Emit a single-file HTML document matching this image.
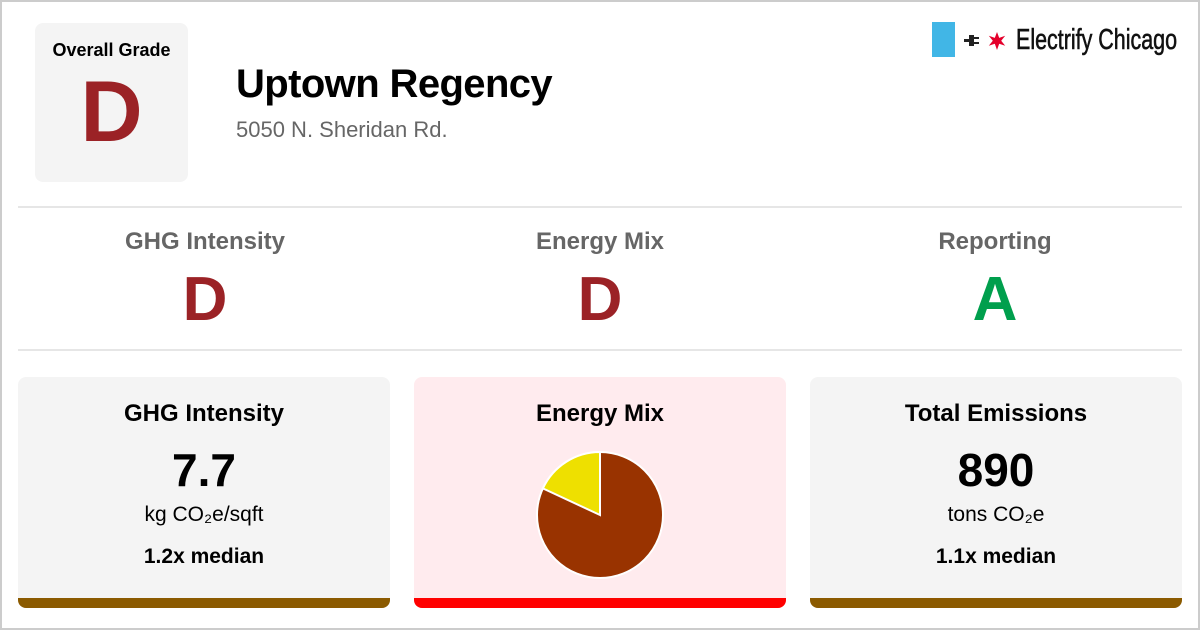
<!DOCTYPE html>
<html><head><meta charset="utf-8"><style>
*{margin:0;padding:0;box-sizing:border-box}
body{width:1200px;height:630px;background:#fff;font-family:"Liberation Sans",Roboto,sans-serif;position:relative;overflow:hidden}
.frame{position:absolute;left:0;top:0;width:1200px;height:630px;border:2px solid #ccc}
.grade{position:absolute;left:35px;top:23px;width:153px;height:159px;background:#f4f4f4;border-radius:8px;text-align:center}
.grade .l{font-weight:bold;font-size:18px;margin-top:17px}
.grade .g{font-weight:bold;font-size:86px;color:#9b2226;line-height:86px;margin-top:8px}
h1{position:absolute;left:236px;top:62px;font-size:40px;font-weight:bold;color:#000;letter-spacing:-0.6px}
.addr{position:absolute;left:236px;top:117px;font-size:22px;color:#666}
.hr{position:absolute;left:18px;width:1164px;height:2px;background:#e6e6e6}
.col{position:absolute;width:390px;text-align:center}
.col .t{font-size:24px;font-weight:bold;color:#666}
.col .v{font-size:62px;font-weight:bold;line-height:62px;margin-top:13px}
.card{position:absolute;top:377px;width:372px;height:231px;background:#f4f4f4;border-radius:8px;overflow:hidden;text-align:center}
.card .t{font-size:24px;font-weight:bold;margin-top:23px}
.card .n{font-size:46px;font-weight:bold;margin-top:15px;line-height:54px}
.card .u{font-size:21px;margin-top:6px}
.card .m{font-size:21px;font-weight:bold;margin-top:18px}
.bar{position:absolute;left:0;bottom:0;width:100%;height:10px}
</style></head><body>
<div class="frame"></div>
<div class="grade"><div class="l">Overall Grade</div><div class="g">D</div></div>
<h1>Uptown Regency</h1>
<div class="addr">5050 N. Sheridan Rd.</div>
<div style="position:absolute;left:932px;top:22px;width:23px;height:35px;background:#41b6e6"></div>
<svg style="position:absolute;left:962px;top:31px" width="50" height="20" viewBox="0 0 50 20">
<rect x="2" y="8" width="6" height="3" fill="#222"/><path d="M7 4h5v11H7z" fill="#222"/><rect x="12" y="6" width="5" height="2" fill="#222"/><rect x="12" y="11" width="5" height="2" fill="#222"/>
<path d="M35 1l2.2 5.9 6-2.1-4 5 4 5-6-2.1L35 19l-2.2-6.3-6 2.1 4-5-4-5 6 2.1z" fill="#e4002b"/>
</svg>
<div style="position:absolute;left:1016px;top:24px;font-size:29px;color:#111;white-space:nowrap;font-family:'Liberation Sans Narrow','Liberation Sans',sans-serif;transform:scaleX(0.74);transform-origin:left;-webkit-text-stroke:0.6px #111">Electrify Chicago</div>
<div class="hr" style="top:206px"></div>
<div class="hr" style="top:349px"></div>
<div class="col" style="left:10px;top:228px"><div class="t">GHG Intensity</div><div class="v" style="color:#9b2226">D</div></div>
<div class="col" style="left:405px;top:228px"><div class="t">Energy Mix</div><div class="v" style="color:#9b2226">D</div></div>
<div class="col" style="left:800px;top:228px"><div class="t">Reporting</div><div class="v" style="color:#009f4d">A</div></div>
<div class="card" style="left:18px"><div class="t">GHG Intensity</div><div class="n">7.7</div><div class="u">kg CO₂e/sqft</div><div class="m">1.2x median</div><div class="bar" style="background:#8b5a00"></div></div>
<div class="card" style="left:414px;background:#ffebee"><div class="t">Energy Mix</div>
<svg style="position:absolute;left:120px;top:72px" width="132" height="132" viewBox="-66 -66 132 132">
<circle r="63" fill="#993300" stroke="#fff" stroke-width="2"/>
<path d="M0 0L-57.1 -26.6A63 63 0 0 1 0 -63Z" fill="#eee000" stroke="#fff" stroke-width="2"/>
</svg>
<div class="bar" style="background:#f00"></div></div>
<div class="card" style="left:810px"><div class="t">Total Emissions</div><div class="n">890</div><div class="u">tons CO₂e</div><div class="m">1.1x median</div><div class="bar" style="background:#8b5a00"></div></div>
</body></html>
